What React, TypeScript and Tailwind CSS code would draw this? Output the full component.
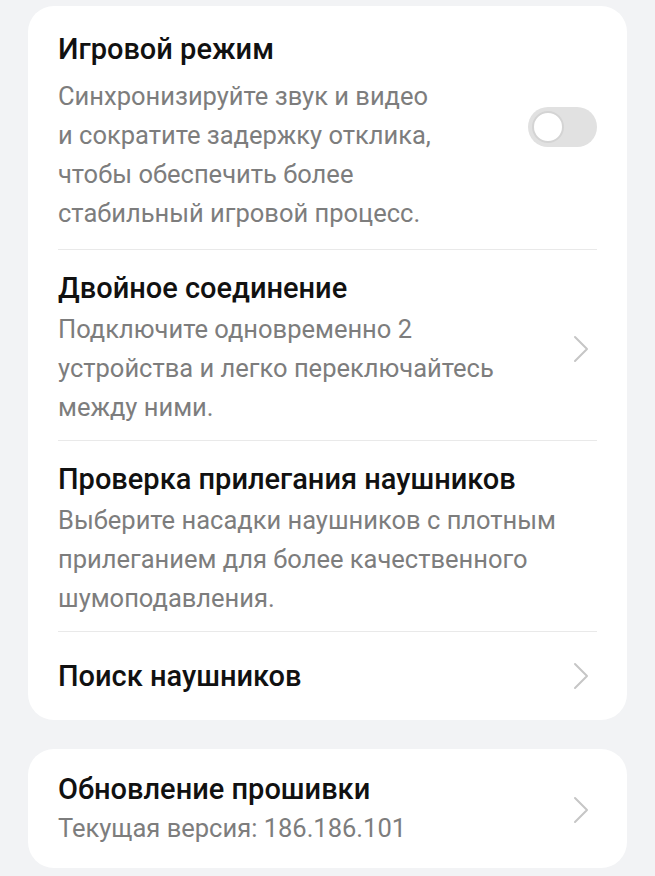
function Toggle() {
	return (
		<div className="flex h-[40px] w-[69px] shrink-0 items-center rounded-full bg-[#e1e1e1] px-[4px]">
			<div className="h-[32px] w-[32px] rounded-full border-[2px] border-[#d4d4d4] bg-white" />
		</div>
	);
}

function Chevron() {
	return (
		<svg
			width="16"
			height="28"
			viewBox="0 0 16 28"
			fill="none"
			className="mr-[8px] shrink-0"
		>
			<polyline
				points="2,2 14,14 2,26"
				stroke="#c6c6c6"
				strokeWidth="2"
				strokeLinecap="round"
				strokeLinejoin="round"
			/>
		</svg>
	);
}

function Row({
	title,
	lines,
	className,
	subClassName,
	right,
}: {
	title: string;
	lines: string[];
	className: string;
	subClassName?: string;
	right?: React.ReactNode;
}) {
	return (
		<div className={`flex items-center gap-4 ${className}`}>
			<div className="flex-1">
				<div className="text-[29px] font-medium leading-[36px] text-[#111111]">
					{title}
				</div>
				{lines.length > 0 && (
					<div
						className={`text-[25.5px] leading-[39px] text-[#7d7d7d] ${subClassName ?? ''}`}
					>
						{lines.map((l) => (
							<div key={l}>{l}</div>
						))}
					</div>
				)}
			</div>
			{right}
		</div>
	);
}

export default function App() {
	return (
		<div
			className="min-h-[876px] w-[655px] bg-[#f2f3f5] px-[28px] pt-[6px]"
			style={{ fontFamily: 'Roboto, "Noto Sans", sans-serif' }}
		>
			<div className="rounded-[26px] bg-white px-[30px]">
				<Row
					className="pt-[25px] pb-[16px]"
					subClassName="mt-[10px]"
					title="Игровой режим"
					lines={[
						'Синхронизируйте звук и видео',
						'и сократите задержку отклика,',
						'чтобы обеспечить более',
						'стабильный игровой процесс.',
					]}
					right={
						<div className="self-start pt-[76px]">
							<Toggle />
						</div>
					}
				/>
				<div className="h-px bg-[#e9e9e9]" />
				<Row
					className="pt-[20px] pb-[13px]"
					subClassName="mt-[4px]"
					title="Двойное соединение"
					lines={[
						'Подключите одновременно 2',
						'устройства и легко переключайтесь',
						'между ними.',
					]}
					right={<Chevron />}
				/>
				<div className="h-px bg-[#e9e9e9]" />
				<Row
					className="pt-[20px] pb-[13px]"
					subClassName="mt-[4px]"
					title="Проверка прилегания наушников"
					lines={[
						'Выберите насадки наушников с плотным',
						'прилеганием для более качественного',
						'шумоподавления.',
					]}
				/>
				<div className="h-px bg-[#e9e9e9]" />
				<Row
					className="h-[88px]"
					title="Поиск наушников"
					lines={[]}
					right={<Chevron />}
				/>
			</div>
			<div className="mt-[29px] rounded-[26px] bg-white px-[30px]">
				<Row
					className="pt-[22px] pb-[20px]"
					subClassName="mt-[2px]"
					title="Обновление прошивки"
					lines={['Текущая версия: 186.186.101']}
					right={<Chevron />}
				/>
			</div>
		</div>
	);
}
